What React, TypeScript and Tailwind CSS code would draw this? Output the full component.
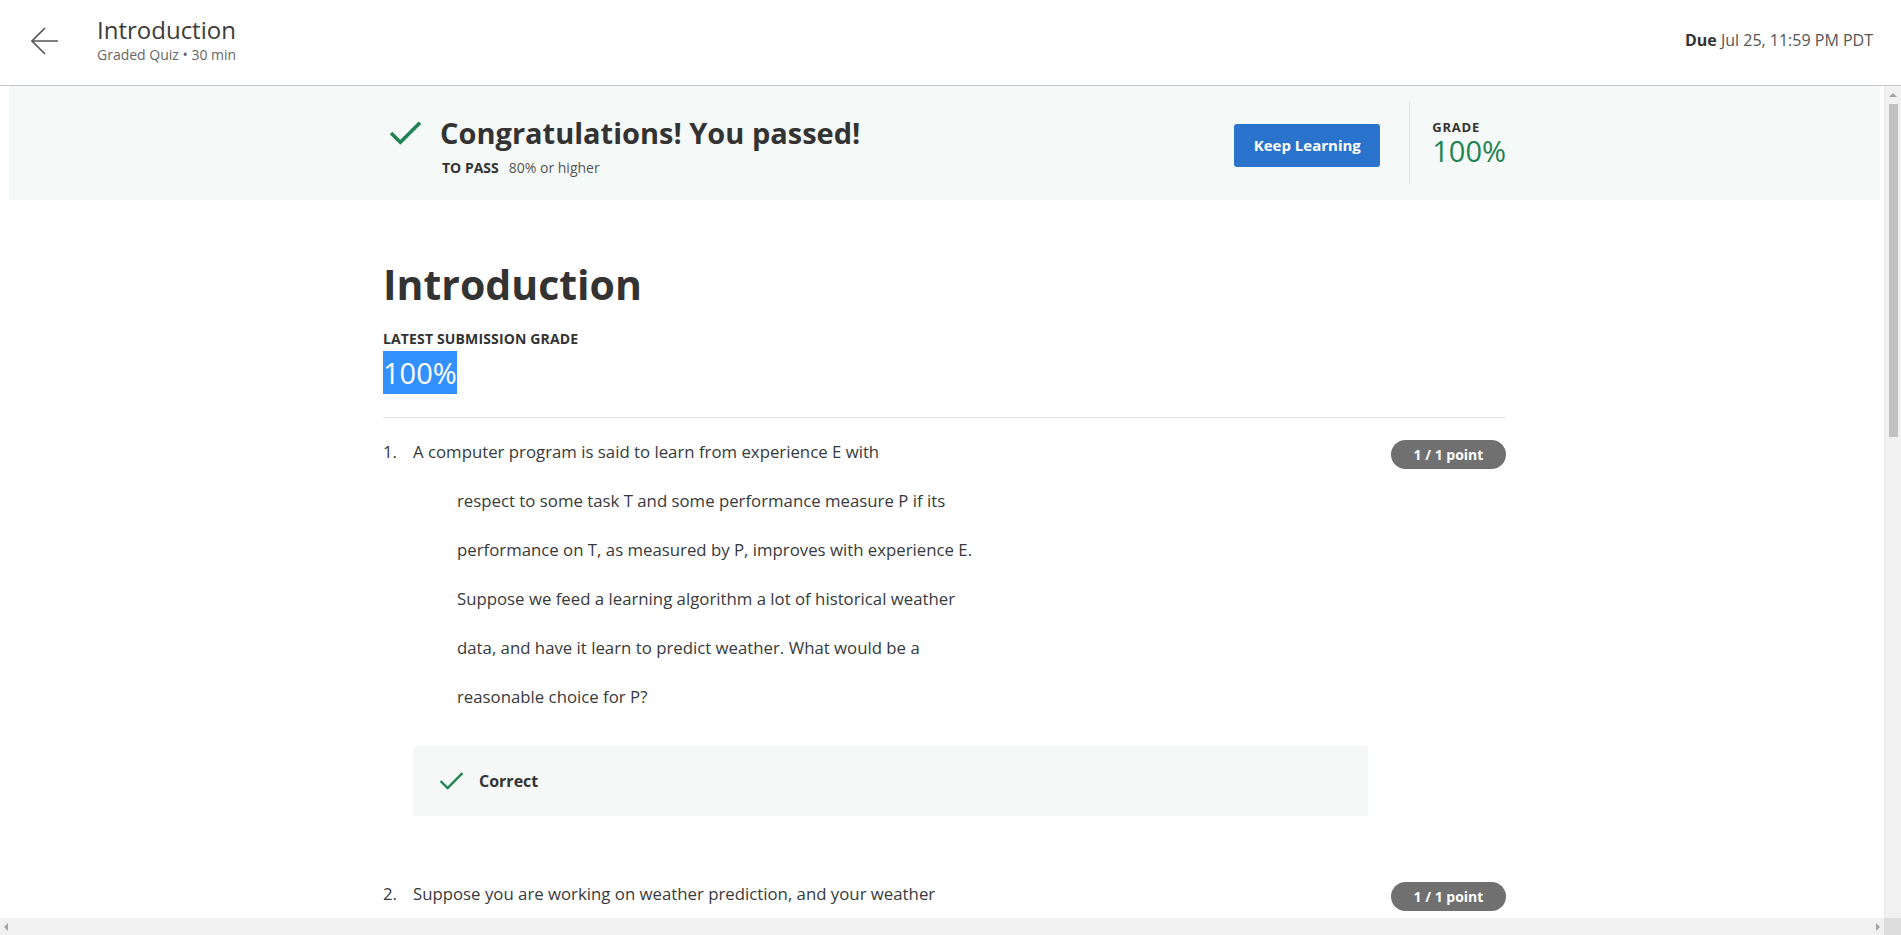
import React from "react";

const lines = [
  "respect to some task T and some performance measure P if its",
  "performance on T, as measured by P, improves with experience E.",
  "Suppose we feed a learning algorithm a lot of historical weather",
  "data, and have it learn to predict weather. What would be a",
  "reasonable choice for P?",
];

function Check({ className, width = 3.5 }: { className?: string; width?: number }) {
  return (
    <svg viewBox="0 0 32 25" className={className} fill="none">
      <polyline
        points="2,12.5 11,21.5 30,2.5"
        stroke="#1f8354"
        strokeWidth={width}
        strokeLinecap="butt"
        strokeLinejoin="miter"
      />
    </svg>
  );
}

function PointBadge() {
  return (
    <div className="ml-[23px] w-[115px] h-[29px] shrink-0 rounded-full bg-[#707070] text-white text-[14px] font-bold flex items-center justify-center">
      1 / 1 point
    </div>
  );
}

export default function App() {
  return (
    <div className="h-screen w-full flex flex-col overflow-hidden bg-white font-['Open_Sans',sans-serif] text-[#373a3c]">
      {/* top bar */}
      <header className="h-[86px] shrink-0 border-b border-[#c6c6c6] flex items-start justify-between">
        <div className="flex items-start pl-[31px]">
          <svg viewBox="0 0 28 28" className="w-[28px] h-[28px] mt-[27px]" fill="none">
            <path d="M1 14H27M14 1L1 14L14 27" stroke="#555" strokeWidth="1.6" />
          </svg>
          <div className="ml-[38px] pt-[15px]">
            <div className="text-[24px] leading-[30px] text-[#3c3c3c]">Introduction</div>
            <div className="text-[14px] leading-[18px] text-[#666] mt-[1px]">Graded Quiz • 30 min</div>
          </div>
        </div>
        <div className="pt-[28px] pr-[28px] text-[16px] leading-6 text-[#555]">
          <span className="font-bold text-[#333]">Due</span> Jul 25, 11:59 PM PDT
        </div>
      </header>

      <div className="flex-1 flex min-h-0">
        <main className="flex-1 min-w-0 overflow-hidden pl-[9px] pr-[4px]">
          {/* pass banner */}
          <div className="h-[114px] bg-[#f5f9f8] py-[16px]">
            <div className="max-w-[1123px] mx-auto h-full flex items-center justify-between">
              <div className="pl-[6px] pt-[5px]">
                <div className="flex items-center">
                  <Check className="w-[33px] h-[26px]" />
                  <h2 className="ml-[18px] text-[29px] leading-[40px] font-bold text-[#333]">
                    Congratulations! You passed!
                  </h2>
                </div>
                <div className="ml-[53px] mt-[5px] text-[14px] leading-[20px] text-[#555]">
                  <span className="font-bold text-[#333]">TO PASS</span>
                  <span className="ml-[10px]">80% or higher</span>
                </div>
              </div>
              <div className="flex items-center self-stretch">
                <button className="mt-[5px] w-[146px] h-[43px] rounded-[3px] bg-[#2a73cc] text-white text-[15px] font-bold">
                  Keep Learning
                </button>
                <div className="ml-[29px] self-stretch border-l border-[#e1e4e3] pl-[22px] flex flex-col justify-center">
                  <div className="text-[13px] leading-[18px] font-bold tracking-[0.06em] text-[#333]">GRADE</div>
                  <div className="text-[29px] leading-[34px] text-[#1f8354] -mt-[2px]">100%</div>
                </div>
              </div>
            </div>
          </div>

          {/* quiz body */}
          <div className="max-w-[1123px] mx-auto pt-[59px]">
            <h1 className="text-[41px] leading-[50px] font-bold text-[#333]">Introduction</h1>
            <div className="mt-[21px] text-[14px] leading-[18px] font-bold tracking-[0.01em] text-[#333]">
              LATEST SUBMISSION GRADE
            </div>
            <div className="mt-[3px] w-fit bg-[#3390ff] text-white text-[29px] leading-[43px]">100%</div>
            <div className="mt-[23px] border-t border-[#e1e1e1]" />

            <div className="mt-[22px] flex items-start">
              <div className="w-[30px] shrink-0 text-[16.8px] leading-6">1.</div>
              <div className="flex-1 min-w-0 text-[16.8px] leading-6">
                <p>A computer program is said to learn from experience E with</p>
                {lines.map((l) => (
                  <p key={l} className="mt-[25px] pl-[44px]">
                    {l}
                  </p>
                ))}
                <div className="mt-[37px] h-[70px] bg-[#f5f8f7] flex items-center pl-[26px]">
                  <Check className="w-[25px] h-[20px]" width={3} />
                  <span className="ml-[15px] text-[16px] font-bold text-[#333]">Correct</span>
                </div>
              </div>
              <PointBadge />
            </div>

            <div className="mt-[66px] flex items-start">
              <div className="w-[30px] shrink-0 text-[16.8px] leading-6">2.</div>
              <div className="flex-1 min-w-0 text-[16.8px] leading-6">
                <p>Suppose you are working on weather prediction, and your weather</p>
              </div>
              <PointBadge />
            </div>
          </div>
        </main>

        {/* vertical scrollbar */}
        <div className="w-[17px] shrink-0 bg-[#f1f1f1] border-l border-[#e8e8e8] flex flex-col items-center">
          <div className="h-[17px] flex items-center justify-center">
            <div className="w-0 h-0 border-l-[4px] border-r-[4px] border-b-[4px] border-l-transparent border-r-transparent border-b-[#a3a3a3]" />
          </div>
          <div className="mt-[1px] w-[9px] h-[333px] bg-[#c1c1c1]" />
        </div>
      </div>

      {/* horizontal scrollbar */}
      <div className="h-[17px] shrink-0 flex">
        <div className="flex-1 bg-[#f1f1f1] flex items-center justify-between px-[4px]">
          <div className="w-0 h-0 border-t-[4px] border-b-[4px] border-r-[4px] border-t-transparent border-b-transparent border-r-[#a3a3a3]" />
          <div className="w-0 h-0 border-t-[4px] border-b-[4px] border-l-[4px] border-t-transparent border-b-transparent border-l-[#a3a3a3]" />
        </div>
        <div className="w-[17px] bg-[#dcdcdc]" />
      </div>
    </div>
  );
}
